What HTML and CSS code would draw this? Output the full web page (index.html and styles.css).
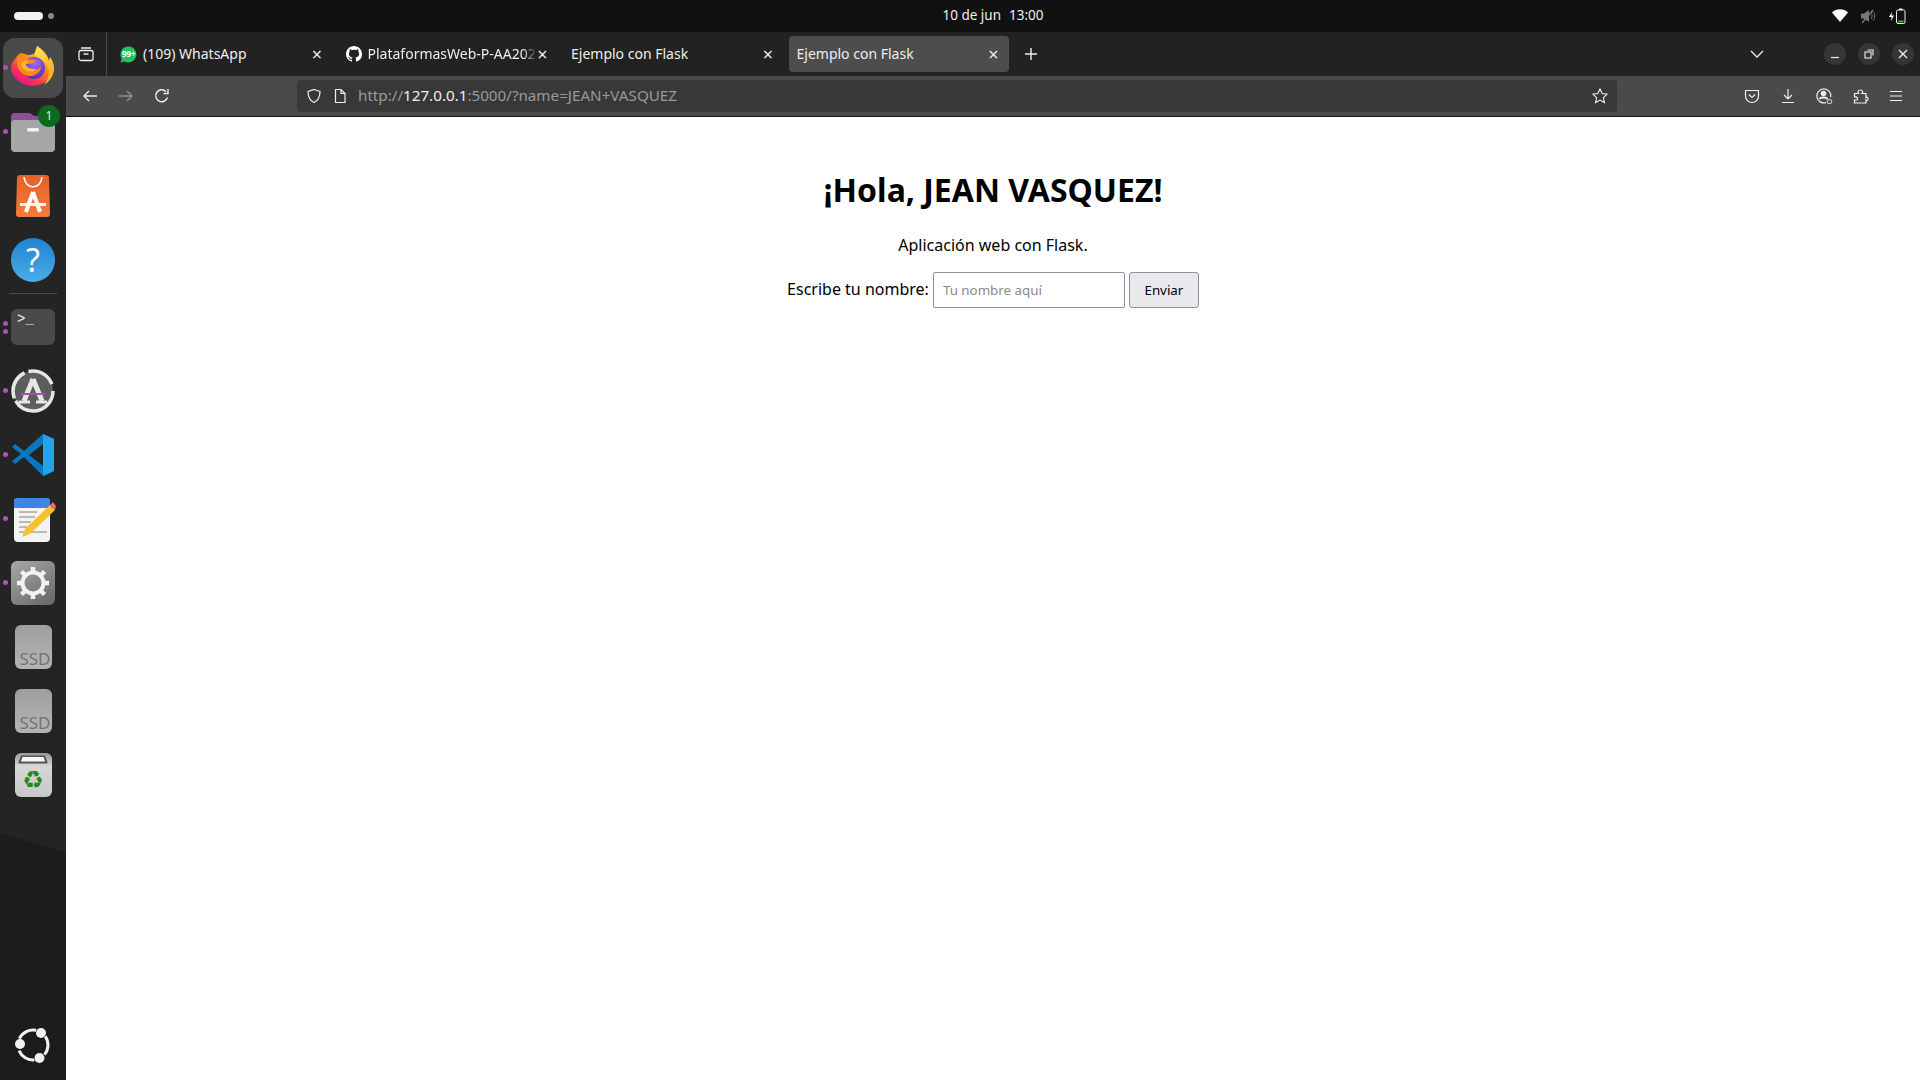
FILE: index.html
```html
<!DOCTYPE html>
<html lang="es">

<head>
    <meta charset="utf-8">
    <title>Ejemplo con Flask</title>
    <link rel="stylesheet" href="styles.css">
</head>

<body>
    <header class="topbar">
        <div class="workspaces"><span class="pill"></span><span class="dot"></span></div>
        <div class="clock"><span>10 de jun</span><span>13:00</span></div>
        <div class="tray">
            <svg width="16" height="14" viewBox="0 0 16 14"><path d="M0 3.500C4.500-.8 11.500-.8 16 3.500L8 13z" fill="#fff"/></svg>
            <svg width="16" height="16" viewBox="0 0 16 16" fill="none"><path d="M1 5.500h3L9 2v12l-5-3.500H1z" fill="#777"/><path d="M11 5c1.500 1.800 1.500 4.200 0 6M13 3.500c2.300 2.600 2.300 6.400 0 9" stroke="#777" stroke-width="1"/><path d="M2 15L13 2" stroke="#777" stroke-width="1.500"/></svg>
            <svg width="18" height="18" viewBox="0 0 18 18" fill="none"><path d="M4 5L1 10h2.500L3 14l3-5.500H3.500z" fill="#fff"/><rect x="8.500" y="3" width="8.500" height="13.500" rx="1.500" stroke="#eee"/><rect x="11" y="1.500" width="3.500" height="1.500" fill="#eee"/><rect x="10" y="13.500" width="5.500" height="2" fill="#3fb618"/></svg>
        </div>
    </header>

    <div class="desktop">
        <nav class="dock">
            <div class="dock-apps">
                <div class="dock-item active running">
                    <svg width="46" height="46" viewBox="0 0 46 46">
                        <defs>
                            <linearGradient id="fxBody" x1="0.850" y1="0.050" x2="0.250" y2="0.950"><stop offset="0" stop-color="#ffd93a"/><stop offset="0.450" stop-color="#ff8a1a"/><stop offset="0.800" stop-color="#f8305a"/><stop offset="1" stop-color="#e8138a"/></linearGradient>
                            <linearGradient id="fxTail" x1="0.300" y1="0" x2="0.700" y2="1"><stop offset="0" stop-color="#ffe14a"/><stop offset="1" stop-color="#ffa51f"/></linearGradient>
                            <radialGradient id="fxGlobe" cx="0.550" cy="0.300" r="0.800"><stop offset="0" stop-color="#a06af5"/><stop offset="1" stop-color="#4327a8"/></radialGradient>
                            <linearGradient id="softBag" x1="0" y1="0" x2="0" y2="1"><stop offset="0" stop-color="#e4622a"/><stop offset="1" stop-color="#f47c3c"/></linearGradient>
                        </defs>
                        <path d="M2.500 17C1 20 1 23 1 25a22 20 0 0 0 43 0c0-4-1-9-4-13l-1 4c-2-7-7-11-12-15 1 5-3 9-8 9-3 0-8-3-10-1-2 2-3 4-6 8z" fill="url(#fxBody)"/>
                        <path d="M27 1c6 4 10 8 12 15 1-1 1-3 1-4 3 4 4 9 4 13-1 7-5 12-10 15 4-5 6-11 4-17-2-7-9-10-13-12-1-3 1-6 2-10z" fill="url(#fxTail)"/>
                        <circle cx="24" cy="23" r="11" fill="url(#fxGlobe)"/>
                        <path d="M7 11c4-1 7 1 10 3 3 1 7 0 9 2-3 3-7 3-10 3-1 3 2 6 6 6 4 1 6-1 9-3-1 6-7 10-13 9C10 29 6 22 7 11z" fill="#ff8a1a"/>
                        <path d="M11 20c1-4 5-6 7-3-1 1-3 2-2 3 2 4 7 4 10 4-4 4-12 3-15-4z" fill="#ffb52e"/>
                    </svg>
                </div>
                <div class="dock-item running">
                    <svg width="44" height="40" viewBox="0 0 44 40">
                        <path d="M0 5a4 4 0 0 1 4-4h14c3 0 3 3 6 3h16a4 4 0 0 1 4 4v12H0z" fill="#8e4f99"/>
                        <rect y="8" width="44" height="32" rx="4" fill="#a6a6a6"/>
                        <rect x="16" y="16" width="12" height="3.500" rx="1.500" fill="#f2f2f2"/>
                    </svg>
                    <span class="badge">1</span>
                </div>
                <div class="dock-item">
                    <svg width="34" height="42" viewBox="0 0 34 42">
                        <path d="M4 0h26a3 3 0 0 1 3 3l1 36a3 3 0 0 1-3 3H3a3 3 0 0 1-3-3L1 3a3 3 0 0 1 3-3z" fill="url(#softBag)"/>
                        <path d="M8 2c1 13 17 13 18 0" fill="none" stroke="#fff" stroke-width="1.600"/>
                        <path d="M17 17L10 37M17 17l7 20" stroke="#fff" stroke-width="4" fill="none"/>
                        <path d="M4 29.500h26" stroke="#fff" stroke-width="3" fill="none"/>
                    </svg>
                </div>
                <div class="dock-item">
                    <div class="help-icon">?</div>
                </div>
                <div class="dock-sep"></div>
                <div class="dock-item running double">
                    <div class="term-icon">&gt;_</div>
                </div>
                <div class="dock-item running">
                    <svg width="46" height="46" viewBox="0 0 46 46">
                        <circle cx="23" cy="23" r="20" fill="#5d5d5d" stroke="#e6e6e6" stroke-width="3.500" stroke-dasharray="52 3 30 4 29 8"/>
                        <path d="M23 11L14 33M23 11l9 22" stroke="#e6e6e6" stroke-width="5" fill="none"/>
                        <path d="M9 34h11M26 34h11" stroke="#e6e6e6" stroke-width="3" fill="none"/>
                        <path d="M11 26h24" stroke="#a550b0" stroke-width="2"/>
                    </svg>
                </div>
                <div class="dock-item running">
                    <svg width="44" height="44" viewBox="0 0 44 44">
                        <path d="M32 1l11 5v32l-11 5L13 24 4 31 1 28l9-7-9-7 3-3 9 7z" fill="#0a76c0"/>
                        <path d="M32 1l11 5v32l-11 5z" fill="#22a3ee"/>
                        <path d="M32 11v22L18 22z" fill="#242424"/>
                    </svg>
                </div>
                <div class="dock-item running">
                    <svg width="46" height="46" viewBox="0 0 46 46">
                        <rect x="4" y="2" width="36" height="44" rx="4" fill="#f3f3f3"/>
                        <path d="M4 6a4 4 0 0 1 4-4h28a4 4 0 0 1 4 4v6H4z" fill="#3f84e0"/>
                        <path d="M9 16h18M9 21h16M9 26h12M9 31h8M9 36h28" stroke="#bdb9ae" stroke-width="2"/>
                        <path d="M40 9l5 5-25 24-8 3 3-8z" fill="#f5c12e"/>
                        <path d="M40 9l3-3 3 4-1 4z" fill="#ee6b6b"/>
                    </svg>
                </div>
                <div class="dock-item running">
                    <div class="settings-tile">
                        <svg width="36" height="36" viewBox="0 0 36 36">
                            <circle cx="18" cy="18" r="10.500" fill="none" stroke="#f2f2f2" stroke-width="4"/>
                            <path d="M18 2v6M18 28v6M2 18h6M28 18h6M6.500 6.500l4 4M25.500 25.500l4 4M6.500 29.500l4-4M25.500 10.500l4-4" stroke="#f2f2f2" stroke-width="4.500"/>
                        </svg>
                    </div>
                </div>
                <div class="dock-item"><div class="ssd-icon">SSD</div></div>
                <div class="dock-item"><div class="ssd-icon">SSD</div></div>
                <div class="dock-item">
                    <div class="trash-icon">
                        <svg width="30" height="9" viewBox="0 0 30 9"><path d="M3 .5h24l2.500 6.500a1 1 0 0 1-1 1.500H1.500a1 1 0 0 1-1-1.500z" fill="#555"/><path d="M4.500 2h21l1.500 4.500H3z" fill="#fafafa"/></svg>
                        <span class="trash-mark">♻</span>
                    </div>
                </div>
            </div>
            <svg class="ubuntu-logo" width="38" height="38" viewBox="0 0 38 38" fill="none">
                <path d="M5.400 12.700A15 15 0 0 1 22.100 4.300M31.300 10.400A15 15 0 0 1 30.500 28.600M20.300 33.900A15 15 0 0 1 5.100 24.600" stroke="#f2f2f2" stroke-width="3"/>
                <circle cx="6" cy="18" r="5" fill="#f2f2f2"/>
                <circle cx="27" cy="7" r="5" fill="#f2f2f2"/>
                <circle cx="25.500" cy="32" r="5" fill="#f2f2f2"/>
            </svg>
        </nav>

        <div class="browser">
            <div class="tabbar">
                <div class="tabview">
                    <svg width="16" height="16" viewBox="0 0 16 16" fill="none" stroke="#eee" stroke-width="1.300"><rect x="1" y="4.500" width="14" height="10" rx="2"/><path d="M3 2h10M5.500 8h5"/></svg>
                </div>
                <div class="tab">
                    <svg class="favicon" width="17" height="17" viewBox="0 0 17 17"><path d="M8.500 0.500a8 8 0 1 1-4 15L0.500 16.500l1.200-3.800a8 8 0 0 1 6.800-12.200z" fill="#25c35f"/><text x="8.800" y="11.300" class="fav-text">99+</text></svg>
                    <span class="tab-title">(109) WhatsApp</span>
                    <span class="tab-close">×</span>
                </div>
                <div class="tab">
                    <svg class="favicon" width="16" height="16" viewBox="0 0 16 16"><path fill="#fff" d="M8 0C3.580 0 0 3.580 0 8c0 3.540 2.290 6.530 5.470 7.590.4.070.55-.17.550-.38 0-.19-.01-.82-.01-1.490-2.010.37-2.530-.49-2.690-.94-.09-.23-.48-.94-.82-1.130-.28-.15-.68-.52-.01-.53.630-.01 1.080.58 1.230.82.720 1.210 1.870.87 2.330.66.070-.52.280-.87.510-1.070-1.780-.2-3.640-.89-3.640-3.950 0-.87.310-1.590.820-2.150-.08-.2-.36-1.020.08-2.120 0 0 .67-.21 2.200.82.640-.18 1.320-.27 2-.27s1.360.09 2 .27c1.530-1.040 2.200-.82 2.200-.82.440 1.100.16 1.920.08 2.120.51.560.82 1.270.82 2.150 0 3.070-1.870 3.750-3.650 3.950.29.250.54.730.54 1.480 0 1.070-.01 1.930-.01 2.200 0 .21.150.46.550.38A8.010 8.010 0 0 0 16 8c0-4.420-3.580-8-8-8z"/></svg>
                    <span class="tab-title fade">PlataformasWeb-P-AA202</span>
                    <span class="tab-close">×</span>
                </div>
                <div class="tab">
                    <span class="tab-title">Ejemplo con Flask</span>
                    <span class="tab-close">×</span>
                </div>
                <div class="tab selected">
                    <span class="tab-title">Ejemplo con Flask</span>
                    <span class="tab-close">×</span>
                </div>
                <svg class="newtab" width="14" height="14" viewBox="0 0 14 14" stroke="#eee" stroke-width="1.400"><path d="M7 1v12M1 7h12"/></svg>
                <div class="tabbar-end">
                    <svg class="tablist" width="14" height="8" viewBox="0 0 14 8" fill="none" stroke="#eee" stroke-width="1.300"><path d="M1 1l6 6 6-6"/></svg>
                    <div class="winbtns">
                        <span class="winbtn"><svg width="10" height="10" viewBox="0 0 10 10" stroke="#eee" stroke-width="1.200"><path d="M1 8.500h8"/></svg></span>
                        <span class="winbtn"><svg width="10" height="10" viewBox="0 0 10 10" fill="none" stroke="#eee" stroke-width="1.100"><rect x="1" y="3" width="6" height="6"/><path d="M3.500 1h5.500v5.500"/></svg></span>
                        <span class="winbtn"><svg width="10" height="10" viewBox="0 0 10 10" stroke="#eee" stroke-width="1.400"><path d="M1 1l8 8M9 1l-8 8"/></svg></span>
                    </div>
                </div>
            </div>

            <div class="navbar">
                <div class="nav-left">
                    <svg width="16" height="16" viewBox="0 0 16 16" fill="none" stroke="#eee" stroke-width="1.400"><path d="M15 8H2M7 3L2 8l5 5"/></svg>
                    <svg width="16" height="16" viewBox="0 0 16 16" fill="none" stroke="#8f8f8f" stroke-width="1.400"><path d="M1 8h13M9 3l5 5-5 5"/></svg>
                    <svg width="16" height="16" viewBox="0 0 16 16" fill="none" stroke="#eee" stroke-width="1.400"><path d="M13.500 9.500A6 6 0 1 1 12 3.500M14 1v4.500H9.500"/></svg>
                </div>
                <div class="urlbar">
                    <svg width="16" height="16" viewBox="0 0 16 16" fill="none" stroke="#eee" stroke-width="1.200"><path d="M8 1.500l6 2c0 5.500-1.500 9-6 11-4.500-2-6-5.500-6-11z"/></svg>
                    <svg class="page-icon" width="14" height="16" viewBox="0 0 14 16" fill="none" stroke="#eee" stroke-width="1.200"><path d="M2.500 1.500h5.500l4 4v9h-9.500zM8 1.500v4h4"/></svg>
                    <div class="url"><span class="dim">http://</span>127.0.0.1<span class="dim">:5000/?name=JEAN+VASQUEZ</span></div>
                    <svg width="16" height="16" viewBox="0 0 16 16" fill="none" stroke="#eee" stroke-width="1.100"><path d="M8 1l2.100 4.600 5 .6-3.700 3.400 1 5L8 12.100l-4.400 2.500 1-5L.9 6.200l5-.6z"/></svg>
                </div>
                <div class="nav-right">
                    <svg width="16" height="16" viewBox="0 0 16 16" fill="none" stroke="#eee" stroke-width="1.200"><path d="M1.500 2.500h13v5.500a6.500 6.500 0 0 1-13 0z"/><path d="M5 6.500l3 3 3-3"/></svg>
                    <svg width="16" height="16" viewBox="0 0 16 16" fill="none" stroke="#eee" stroke-width="1.200"><path d="M8 1v9.500M4 7l4 4 4-4M2 14.500h12"/></svg>
                    <svg width="18" height="18" viewBox="0 0 18 18" fill="none" stroke="#eee" stroke-width="1.200"><path d="M11 15.600A7 7 0 1 1 15.800 10"/><circle cx="8.500" cy="6.500" r="2.200" fill="#eee"/><path d="M4.500 12c1-2 7-2 8 0" stroke-width="2"/><circle cx="14.500" cy="14.500" r="2.200" stroke="#bbb"/></svg>
                    <svg width="16" height="16" viewBox="0 0 16 16" fill="none" stroke="#eee" stroke-width="1.200"><path d="M1.500 5.500h4c-1-1-.8-3.500 1.800-3.500s3 2.500 1.700 3.500h4v4c1-.8 2-.5 2 1.200s-1 2.300-2 1.300v3h-11.500v-3h2.500c1-1 1-3.500-2.500-3z"/></svg>
                    <svg width="16" height="16" viewBox="0 0 16 16" stroke="#eee" stroke-width="1.200"><path d="M2 3.500h12M2 8h12M2 12.500h12"/></svg>
                </div>
            </div>

            <main class="page">
                <h1>¡Hola, JEAN VASQUEZ!</h1>
                <p>Aplicación web con Flask.</p>
                <form class="name-form">
                    <label for="name">Escribe tu nombre:</label>
                    <input type="text" id="name" placeholder="Tu nombre aquí">
                    <button type="button">Enviar</button>
                </form>
            </main>
        </div>
    </div>
</body>

</html>
```

FILE: styles.css
```css
* {
    box-sizing: border-box;
}

body {
    margin: 0;
    width: 1920px;
    height: 1080px;
    overflow: hidden;
    font-family: "Noto Sans", sans-serif;
    background-color: #fff;
    display: flex;
    flex-direction: column;
}

/* top panel */
.topbar {
    height: 32px;
    background-color: #111;
    color: #eee;
    display: grid;
    grid-template-columns: 1fr auto 1fr;
    align-items: center;
    padding: 0 14px;
}

.workspaces {
    display: flex;
    align-items: center;
    gap: 5px;
}

.pill {
    width: 29px;
    height: 8px;
    border-radius: 4px;
    background-color: #f2f2f2;
}

.dot {
    width: 6px;
    height: 6px;
    border-radius: 50%;
    background-color: #888;
}

.clock {
    display: flex;
    gap: 8px;
    font-size: 13.500px;
    margin-left: 66px;
    padding-bottom: 2px;
}

.tray {
    display: flex;
    align-items: center;
    justify-content: flex-end;
    gap: 12px;
}

.desktop {
    flex: 1;
    display: flex;
    min-height: 0;
}

/* dock */
.dock {
    width: 66px;
    background: linear-gradient(197deg, #242424 0, #242424 76.800%, #1c1c1c 76.900%, #1c1c1c 100%);
    display: flex;
    flex-direction: column;
    justify-content: space-between;
    align-items: center;
    padding: 4px 0 16px;
}

.dock-apps {
    display: flex;
    flex-direction: column;
    align-items: center;
}

.dock-item {
    position: relative;
    width: 66px;
    height: 64px;
    display: flex;
    align-items: center;
    justify-content: center;
}

.dock-item.active::after {
    content: "";
    position: absolute;
    inset: 2px 3px;
    border-radius: 12px;
    background-color: #4a4a4a;
    z-index: 0;
}

.dock-item > * {
    position: relative;
    z-index: 1;
}

.dock-item.running::before {
    content: "";
    position: absolute;
    left: 3px;
    top: 29px;
    width: 5px;
    height: 5px;
    border-radius: 50%;
    background-color: #b04fb8;
    z-index: 2;
}

.dock-item.double::before {
    top: 26px;
    box-shadow: 0 8px 0 #b04fb8;
}

.dock-item .badge {
    position: absolute;
    top: 5px;
    right: 6px;
    width: 22px;
    height: 22px;
    border-radius: 50%;
    background-color: #0b6a1c;
    color: #f2e6a0;
    font-size: 12px;
    line-height: 22px;
    text-align: center;
}

.dock-sep {
    width: 48px;
    height: 1px;
    background-color: #4a4a4a;
    margin: 1px 0;
}

.help-icon {
    width: 44px;
    height: 44px;
    border-radius: 50%;
    background: linear-gradient(#1f82d0, #4aaee8);
    color: #fff;
    font-size: 32px;
    line-height: 44px;
    text-align: center;
}

.term-icon {
    width: 44px;
    height: 36px;
    border-radius: 6px;
    background-color: #4a4a4a;
    color: #f2f2f2;
    font-family: "Liberation Mono", monospace;
    font-size: 14px;
    line-height: 14px;
    padding: 3px 6px;
}

.settings-tile {
    width: 44px;
    height: 44px;
    border-radius: 6px;
    background: linear-gradient(145deg, #a8a8a8, #666);
    display: flex;
    align-items: center;
    justify-content: center;
}

.ssd-icon {
    width: 37px;
    height: 44px;
    border-radius: 6px;
    background: linear-gradient(#9f9f9f, #b4b4b4);
    color: #747474;
    font-size: 17px;
    line-height: 20px;
    text-align: right;
    padding-top: 24px;
    padding-right: 1px;
    overflow: hidden;
}

.trash-icon {
    width: 37px;
    height: 44px;
    border-radius: 6px;
    background: linear-gradient(#9a9a9a, #d6d6d6 30%, #c8c8c8);
    display: flex;
    flex-direction: column;
    align-items: center;
    padding-top: 2px;
}

.trash-mark {
    color: #1d8a1d;
    font-family: "DejaVu Sans", sans-serif;
    font-size: 24px;
    line-height: 32px;
}

/* firefox window */
.browser {
    flex: 1;
    display: flex;
    flex-direction: column;
    min-width: 0;
}

.tabbar {
    height: 44px;
    background-color: #222;
    color: #eee;
    display: flex;
    align-items: center;
    font-size: 14px;
}

.tabview {
    width: 41px;
    height: 44px;
    border-right: 1px solid #4a4a4a;
    display: flex;
    align-items: center;
    justify-content: center;
    margin-right: 5px;
}

.tab {
    width: 220px;
    height: 36px;
    margin-right: 5.500px;
    padding: 0 8px;
    border-radius: 4px;
    display: flex;
    align-items: center;
    gap: 6px;
}

.tab.selected {
    background-color: #4d4d4d;
}

.favicon {
    flex: none;
}

.fav-text {
    fill: #fff;
    font-size: 8px;
    font-weight: 700;
    text-anchor: middle;
}

.tab-title {
    flex: 1;
    overflow: hidden;
    white-space: nowrap;
    padding-bottom: 2px;
}

.tab-title.fade {
    margin-right: -7px;
    -webkit-mask-image: linear-gradient(to left, transparent 0, #000 14px);
    mask-image: linear-gradient(to left, transparent 0, #000 14px);
}

.tab-close {
    flex: none;
    width: 14px;
    font-size: 18px;
    line-height: 18px;
    text-align: center;
}

.newtab {
    margin-left: 10px;
}

.tabbar-end {
    margin-left: auto;
    display: flex;
    align-items: center;
}

.tablist {
    margin-right: 60px;
}

.winbtns {
    display: flex;
    gap: 12px;
    margin-right: 6px;
}

.winbtn {
    width: 22px;
    height: 22px;
    border-radius: 50%;
    background-color: #363636;
    display: flex;
    align-items: center;
    justify-content: center;
}

.navbar {
    height: 41px;
    background-color: #4a4a4a;
    border-bottom: 1px solid #111;
    display: flex;
    align-items: center;
}

.nav-left {
    width: 231px;
    padding-left: 16px;
    display: flex;
    gap: 20px;
    align-items: center;
}

.urlbar {
    width: 1320px;
    height: 32px;
    border-radius: 4px;
    background-color: #383838;
    display: flex;
    align-items: center;
    padding: 0 9px;
    font-size: 15.200px;
}

.page-icon {
    margin-left: 11px;
}

.url {
    flex: 1;
    margin-left: 11px;
    padding-bottom: 2px;
    color: #eee;
    white-space: nowrap;
}

.dim {
    color: #9a9a9a;
}

.nav-right {
    flex: 1;
    display: flex;
    align-items: center;
    gap: 19.500px;
    padding-left: 127px;
}

/* flask page */
.page {
    flex: 1;
    background-color: #fff;
    color: #000;
    text-align: center;
    padding-top: 51px;
}

h1 {
    margin: 0 0 22px;
    font-size: 32px;
    line-height: 44px;
    font-weight: 700;
}

p {
    margin: 0 0 16px;
    font-size: 16px;
    line-height: 22px;
}

.name-form {
    display: flex;
    justify-content: center;
    align-items: center;
    gap: 4px;
    font-size: 16px;
}

label {
    padding-bottom: 2px;
}

input {
    width: 192px;
    height: 36px;
    padding: 0 9px;
    border: 1px solid #8f8f9d;
    border-radius: 2px;
    font-family: "Noto Sans", sans-serif;
    font-size: 13.333px;
}

input::placeholder {
    color: #8a8a8a;
}

button {
    width: 70px;
    height: 36px;
    border: 1px solid #8f8f9d;
    border-radius: 3px;
    background-color: #e9e9ed;
    color: #000;
    font-family: "Noto Sans", sans-serif;
    font-size: 13.333px;
}
```
